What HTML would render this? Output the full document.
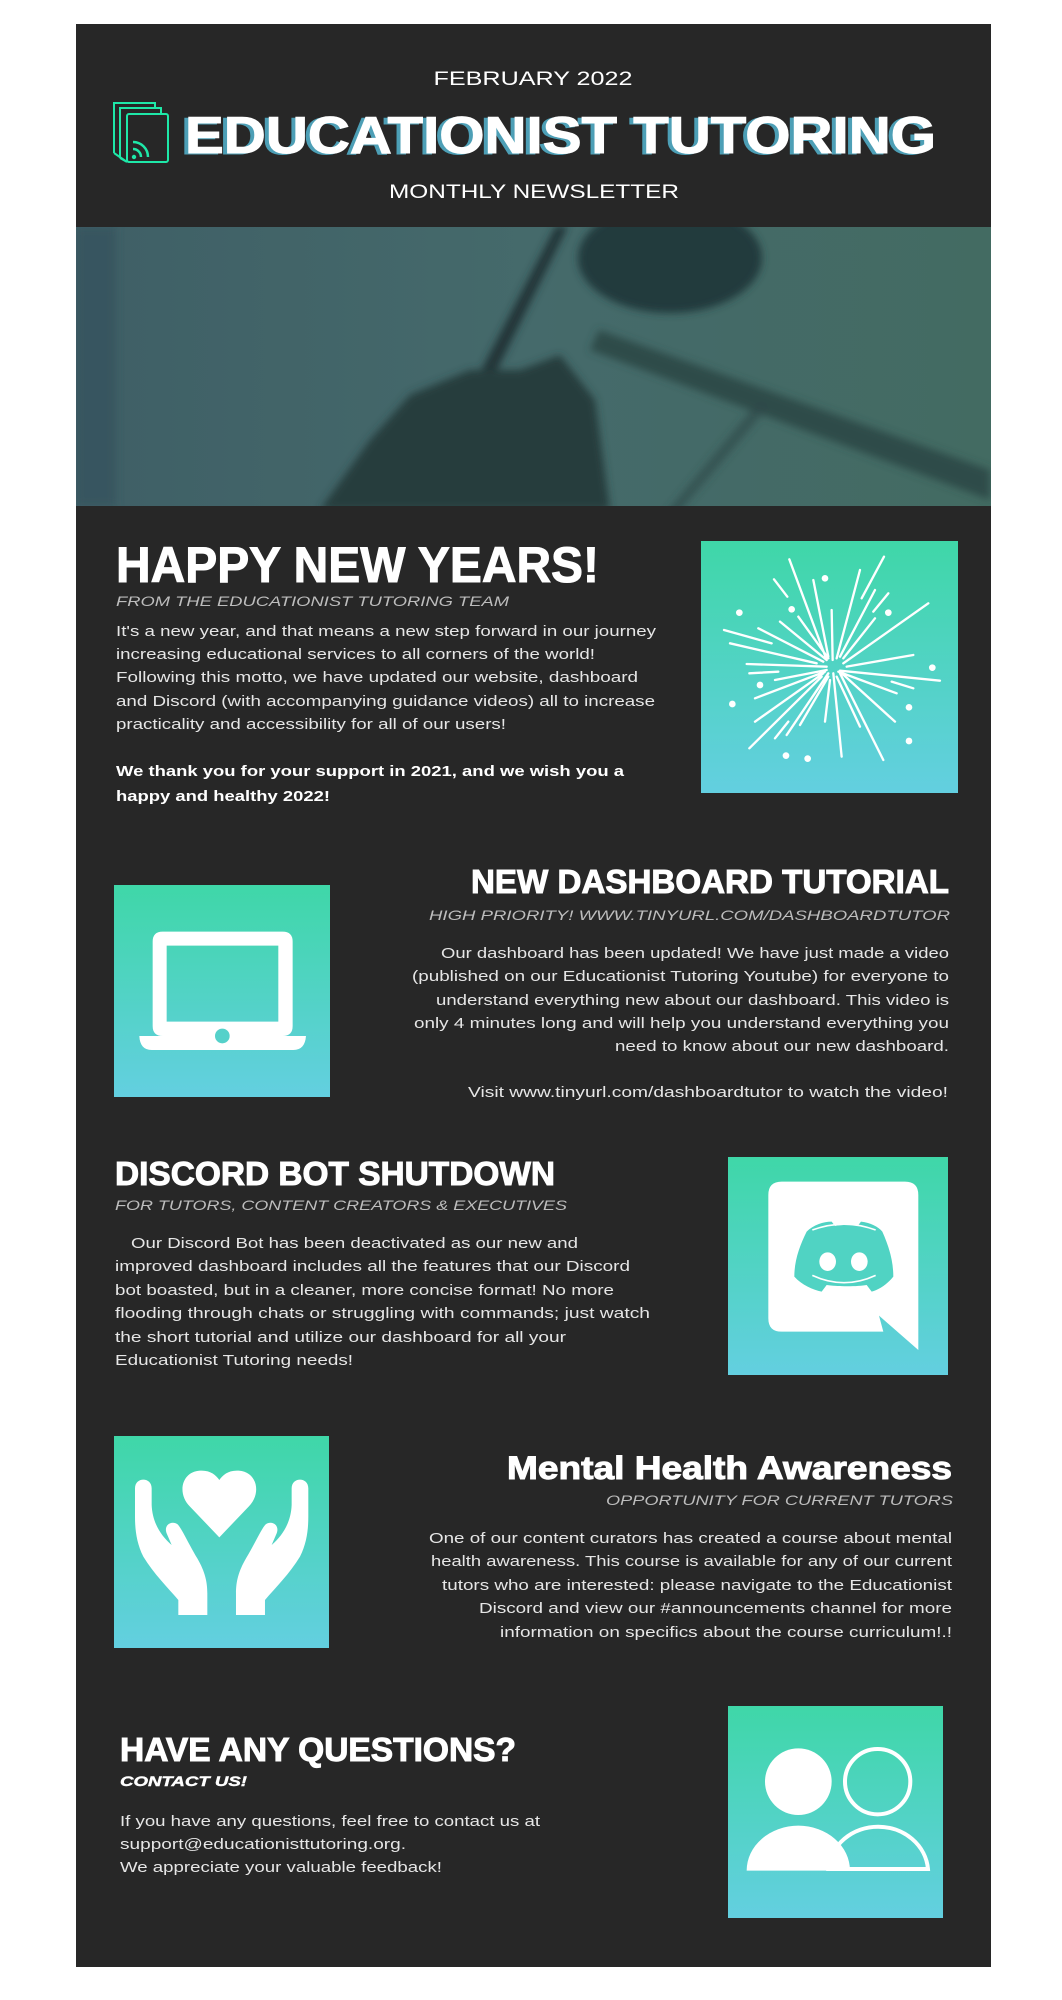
<!DOCTYPE html>
<html><head><meta charset="utf-8"><style>
html,body{margin:0;padding:0;background:#fff;}
svg{display:block;}
.b{font-family:"Liberation Sans",sans-serif;fill:#e6e6e6;font-size:15px;}
.s{font-family:"Liberation Sans",sans-serif;fill:#bdbdbd;font-size:14px;font-style:italic;}
.h{font-family:"Liberation Sans",sans-serif;fill:#fff;font-weight:bold;stroke:#fff;stroke-width:1;}
</style></head><body>
<svg width="1062" height="2000" viewBox="0 0 1062 2000" xmlns="http://www.w3.org/2000/svg">
<defs>
<linearGradient id="g" x1="0" y1="0" x2="0" y2="1"><stop offset="0" stop-color="#3fd7a8"/><stop offset="1" stop-color="#63cfe0"/></linearGradient>
<linearGradient id="hero" x1="0" y1="0" x2="1" y2="0"><stop offset="0" stop-color="#3f5f66"/><stop offset="0.5" stop-color="#456a6b"/><stop offset="1" stop-color="#436b62"/></linearGradient>
<filter id="bl" x="-20%" y="-20%" width="140%" height="140%"><feGaussianBlur stdDeviation="4"/></filter>
<clipPath id="hc"><rect x="76" y="227" width="915" height="279"/></clipPath>
</defs>
<rect x="76" y="24" width="915" height="1943" fill="#272727"/>

<!-- header -->
<text x="533" y="85" text-anchor="middle" font-family="Liberation Sans,sans-serif" font-size="19" fill="#fff" textLength="199" lengthAdjust="spacingAndGlyphs">FEBRUARY 2022</text>
<g fill="none" stroke="#1ee8a8" stroke-width="2">
<path d="M114,153 V103 H155 V108"/>
<path d="M120,158 V108 H161 V114"/>
<rect x="127" y="114" width="41" height="48" rx="2"/>
<path d="M114,153 L127,162 M120,158 L127,162"/>
<path d="M133,149 A8,8 0 0 1 141,157" stroke-width="2.5"/>
<path d="M133,142 A15,15 0 0 1 148,157" stroke-width="2.5"/>
</g>
<circle cx="134" cy="157" r="2.2" fill="#1ee8a8"/>
<text x="181" y="154" class="h" font-size="52" style="fill:#4d9fb6;stroke:#4d9fb6" textLength="751" lengthAdjust="spacingAndGlyphs">EDUCATIONIST TUTORING</text>
<text x="185" y="153" class="h" font-size="52" textLength="751" lengthAdjust="spacingAndGlyphs">EDUCATIONIST TUTORING</text>
<text x="534" y="198" text-anchor="middle" font-family="Liberation Sans,sans-serif" font-size="19" fill="#fff" textLength="290" lengthAdjust="spacingAndGlyphs">MONTHLY NEWSLETTER</text>

<!-- hero -->
<g clip-path="url(#hc)">
<rect x="76" y="227" width="915" height="279" fill="url(#hero)"/>
<g filter="url(#bl)">
<rect x="76" y="227" width="40" height="279" fill="#34505a" opacity="0.6"/>
<ellipse cx="670" cy="258" rx="92" ry="55" fill="#243a3c"/>
<path d="M599,330 L990,470 L990,500 L590,350 Z" fill="#2e4b48"/>
<path d="M556,226 L568,226 L488,388 L474,384 Z" fill="#233638"/>
<path d="M410,395 L470,370 L520,370 L560,355 L595,400 L610,510 L320,510 L370,440 Z" fill="#263c3c"/>
<path d="M660,520 L760,400 L770,405 L672,520 Z" fill="#2e4a48" opacity="0.7"/>
</g>
</g>

<!-- section 1 -->
<text x="116" y="582" class="h" font-size="50" textLength="483" lengthAdjust="spacingAndGlyphs">HAPPY NEW YEARS!</text>
<text x="116" y="606" class="s" textLength="393" lengthAdjust="spacingAndGlyphs">FROM THE EDUCATIONIST TUTORING TEAM</text>
<text x="116" y="636" class="b" textLength="540" lengthAdjust="spacingAndGlyphs">It's a new year, and that means a new step forward in our journey</text>
<text x="116" y="659" class="b" textLength="479" lengthAdjust="spacingAndGlyphs">increasing educational services to all corners of the world!</text>
<text x="116" y="682" class="b" textLength="522" lengthAdjust="spacingAndGlyphs">Following this motto, we have updated our website, dashboard</text>
<text x="116" y="706" class="b" textLength="539" lengthAdjust="spacingAndGlyphs">and Discord (with accompanying guidance videos) all to increase</text>
<text x="116" y="729" class="b" textLength="390" lengthAdjust="spacingAndGlyphs">practicality and accessibility for all of our users!</text>
<text x="116" y="776" class="b" font-weight="bold" style="fill:#fff" textLength="508" lengthAdjust="spacingAndGlyphs">We thank you for your support in 2021, and we wish you a</text>
<text x="116" y="801" class="b" font-weight="bold" style="fill:#fff" textLength="214" lengthAdjust="spacingAndGlyphs">happy and healthy 2022!</text>
<rect x="701" y="541" width="257" height="252" fill="url(#g)"/>
<g transform="translate(700,540) scale(0.3333)" stroke="#fff" stroke-width="7" stroke-linecap="round" fill="#fff">
<path d="M268,58L380,360M222,118L262,170M340,120L385,350M395,210L398,360M480,90L410,355M552,50L485,175M525,150L420,350M565,160L520,215M685,190L430,370M525,235L430,355M72,270L215,310M175,265L370,365M240,245L380,360M295,230L385,355M90,310L350,370M140,372L380,380M148,400L235,395M640,345L440,380M720,422L420,392M640,445L575,425M225,420L380,390M165,475L375,395M590,460L415,395M165,545L370,400M148,625L365,410M225,595L265,545M260,585L385,400M300,555L385,410M375,545L390,420M425,650L400,400M480,560L410,410M550,660L420,400M585,545L420,395"/>
<g stroke="none"><circle cx="375" cy="115" r="10"/><circle cx="118" cy="218" r="10"/><circle cx="275" cy="208" r="10"/><circle cx="565" cy="218" r="10"/><circle cx="697" cy="383" r="10"/><circle cx="180" cy="435" r="10"/><circle cx="97" cy="492" r="10"/><circle cx="627" cy="502" r="10"/><circle cx="627" cy="603" r="10"/><circle cx="258" cy="647" r="10"/><circle cx="323" cy="656" r="10"/></g>
</g>

<!-- section 2 -->
<rect x="114" y="885" width="216" height="212" fill="url(#g)"/>
<g transform="translate(110,880) scale(0.3333)" fill="#fff">
<path fill-rule="evenodd" d="M158,155 H518 Q548,155 548,185 V438 Q548,468 518,468 H158 Q128,468 128,438 V185 Q128,155 158,155 Z M170,197 V425 H505 V197 Z"/>
<path d="M88,468 H588 Q585,510 550,510 H125 Q90,510 88,468 Z"/>
<circle cx="337" cy="468" r="22" fill="#55d1ca"/>
</g>
<text x="949" y="893" text-anchor="end" class="h" font-size="33" textLength="478" lengthAdjust="spacingAndGlyphs">NEW DASHBOARD TUTORIAL</text>
<text x="950" y="920" text-anchor="end" class="s" textLength="521" lengthAdjust="spacingAndGlyphs">HIGH PRIORITY! WWW.TINYURL.COM/DASHBOARDTUTOR</text>
<text x="949" y="958" text-anchor="end" class="b" textLength="508" lengthAdjust="spacingAndGlyphs">Our dashboard has been updated! We have just made a video</text>
<text x="949" y="981" text-anchor="end" class="b" textLength="537" lengthAdjust="spacingAndGlyphs">(published on our Educationist Tutoring Youtube) for everyone to</text>
<text x="949" y="1005" text-anchor="end" class="b" textLength="513" lengthAdjust="spacingAndGlyphs">understand everything new about our dashboard. This video is</text>
<text x="949" y="1028" text-anchor="end" class="b" textLength="535" lengthAdjust="spacingAndGlyphs">only 4 minutes long and will help you understand everything you</text>
<text x="949" y="1051" text-anchor="end" class="b" textLength="334" lengthAdjust="spacingAndGlyphs">need to know about our new dashboard.</text>
<text x="948" y="1097" text-anchor="end" class="b" textLength="480" lengthAdjust="spacingAndGlyphs">Visit www.tinyurl.com/dashboardtutor to watch the video!</text>

<!-- section 3 -->
<text x="115" y="1185" class="h" font-size="33" textLength="440" lengthAdjust="spacingAndGlyphs">DISCORD BOT SHUTDOWN</text>
<text x="115" y="1210" class="s" textLength="452" lengthAdjust="spacingAndGlyphs">FOR TUTORS, CONTENT CREATORS &amp; EXECUTIVES</text>
<text x="131" y="1248" class="b" textLength="447" lengthAdjust="spacingAndGlyphs">Our Discord Bot has been deactivated as our new and</text>
<text x="115" y="1271" class="b" textLength="515" lengthAdjust="spacingAndGlyphs">improved dashboard includes all the features that our Discord</text>
<text x="115" y="1295" class="b" textLength="499" lengthAdjust="spacingAndGlyphs">bot boasted, but in a cleaner, more concise format! No more</text>
<text x="115" y="1318" class="b" textLength="535" lengthAdjust="spacingAndGlyphs">flooding through chats or struggling with commands; just watch</text>
<text x="115" y="1342" class="b" textLength="451" lengthAdjust="spacingAndGlyphs">the short tutorial and utilize our dashboard for all your</text>
<text x="115" y="1365" class="b" textLength="238" lengthAdjust="spacingAndGlyphs">Educationist Tutoring needs!</text>
<rect x="728" y="1157" width="220" height="218" fill="url(#g)"/>
<g transform="translate(725,1150) scale(0.3333)">
<path fill="#fff" d="M170,95 H540 Q580,95 580,135 V600 L462,497 L475,545 H170 Q130,545 130,505 V135 Q130,95 170,95 Z"/>
<path fill="#50d3c3" d="M245,245 C265,225 295,215 320,215 L330,228 C345,224 385,224 398,228 L408,215 C435,218 460,230 472,245 C490,285 505,330 505,380 C485,405 460,420 440,425 L425,405 C400,410 335,410 305,405 L290,425 C265,420 230,405 208,380 C208,330 225,285 245,245 Z"/>
<path d="M262,240 Q357,205 452,240" fill="none" stroke="#fff" stroke-width="5"/>
<path d="M262,376 Q357,420 452,376" fill="none" stroke="#fff" stroke-width="5"/>
<ellipse cx="308" cy="335" rx="25" ry="28" fill="#fff"/>
<ellipse cx="403" cy="335" rx="25" ry="28" fill="#fff"/>
</g>

<!-- section 4 -->
<rect x="114" y="1436" width="215" height="212" fill="url(#g)"/>
<g transform="translate(110,1430) scale(0.3333)" fill="#fff">
<path d="M328,322 L240,230 C200,190 215,125 270,122 C300,120 318,135 328,150 C338,135 356,120 386,122 C441,125 456,190 416,230 Z"/>
<path d="M75,175 C75,140 125,140 125,175 L125,225 C127,275 150,315 185,345 L170,310 C160,285 185,270 203,283 C215,295 235,340 262,385 C285,425 292,455 292,490 L292,555 L205,555 L205,510 C175,475 130,430 100,380 C80,340 75,300 75,260 Z"/>
<path transform="translate(670,0) scale(-1,1)" d="M75,175 C75,140 125,140 125,175 L125,225 C127,275 150,315 185,345 L170,310 C160,285 185,270 203,283 C215,295 235,340 262,385 C285,425 292,455 292,490 L292,555 L205,555 L205,510 C175,475 130,430 100,380 C80,340 75,300 75,260 Z"/>
</g>
<text x="952" y="1479" text-anchor="end" class="h" font-size="32" textLength="445" lengthAdjust="spacingAndGlyphs">Mental Health Awareness</text>
<text x="953" y="1505" text-anchor="end" class="s" textLength="347" lengthAdjust="spacingAndGlyphs">OPPORTUNITY FOR CURRENT TUTORS</text>
<text x="952" y="1543" text-anchor="end" class="b" textLength="523" lengthAdjust="spacingAndGlyphs">One of our content curators has created a course about mental</text>
<text x="952" y="1566" text-anchor="end" class="b" textLength="521" lengthAdjust="spacingAndGlyphs">health awareness. This course is available for any of our current</text>
<text x="952" y="1590" text-anchor="end" class="b" textLength="510" lengthAdjust="spacingAndGlyphs">tutors who are interested: please navigate to the Educationist</text>
<text x="952" y="1613" text-anchor="end" class="b" textLength="473" lengthAdjust="spacingAndGlyphs">Discord and view our #announcements channel for more</text>
<text x="952" y="1637" text-anchor="end" class="b" textLength="452" lengthAdjust="spacingAndGlyphs">information on specifics about the course curriculum!.!</text>

<!-- section 5 -->
<text x="120" y="1761" class="h" font-size="33" textLength="396" lengthAdjust="spacingAndGlyphs">HAVE ANY QUESTIONS?</text>
<text x="120" y="1786" class="h" font-size="14" font-style="italic" style="stroke-width:0.4" textLength="127" lengthAdjust="spacingAndGlyphs">CONTACT US!</text>
<text x="120" y="1826" class="b" textLength="420" lengthAdjust="spacingAndGlyphs">If you have any questions, feel free to contact us at</text>
<text x="120" y="1849" class="b" textLength="286" lengthAdjust="spacingAndGlyphs">support@educationisttutoring.org.</text>
<text x="120" y="1872" class="b" textLength="322" lengthAdjust="spacingAndGlyphs">We appreciate your valuable feedback!</text>
<rect x="728" y="1706" width="215" height="212" fill="url(#g)"/>
<g transform="translate(725,1700) scale(0.3333)">
<circle cx="220" cy="245" r="100" fill="#fff"/>
<circle cx="458" cy="245" r="98" fill="none" stroke="#fff" stroke-width="12"/>
<path d="M310,507 A150,138 0 0 1 609,507 Z" fill="none" stroke="#fff" stroke-width="12"/>
<path d="M65,512 A155,135 0 0 1 375,512 Z" fill="#fff"/>
</g>
</svg>
</body></html>
